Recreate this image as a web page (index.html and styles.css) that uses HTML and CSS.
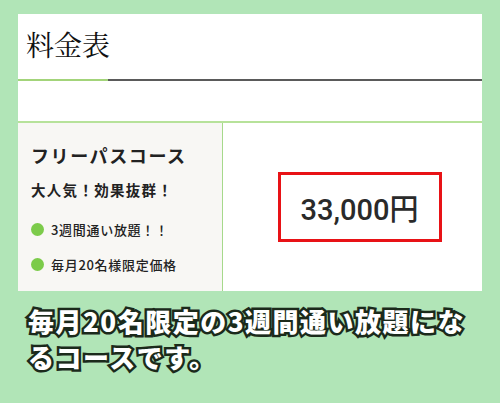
FILE: index.html
```html
<!DOCTYPE html>
<html lang="ja">
<head>
<meta charset="utf-8">
<link rel="stylesheet" href="styles.css">
</head>
<body>
<div class="panel">
  <div class="title-row"><h1 class="title">料金表</h1></div>
  <div class="blank-row"></div>
  <div class="table-row">
    <div class="course">
      <div class="course-name">フリーパスコース</div>
      <div class="course-tag">大人気！効果抜群！</div>
      <ul class="points">
        <li><span class="dot"></span>3週間通い放題！！</li>
        <li><span class="dot"></span>毎月20名様限定価格</li>
      </ul>
    </div>
    <div class="price-cell">
      <div class="price">33,000円</div>
    </div>
  </div>
</div>
<p class="caption">毎月20名限定の3週間通い放題になるコースです。</p>
</body>
</html>
```
FILE: styles.css
```css
html, body {
  margin: 0;
  padding: 0;
}
body {
  background: #b1e5b7;
  width: 500px;
  height: 403px;
  overflow: hidden;
  font-family: "Noto Sans CJK JP", "Noto Sans", sans-serif;
}
.panel {
  margin: 14px 18px 0;
  width: 464px;
  background: #fff;
}
.title-row {
  height: 67px;
  border-bottom: 2px solid #5a5a5a;
  position: relative;
  box-sizing: border-box;
  padding-left: 8px;
}
.title-row::after {
  content: "";
  position: absolute;
  left: 0;
  bottom: -2px;
  width: 90px;
  height: 2px;
  background: #a3d47a;
}
.title {
  margin: 0;
  font-weight: 400;
  font-size: 28px;
  line-height: 60px;
  color: #111;
  font-family: "Noto Serif CJK JP", "Noto Sans CJK JP", serif;
}
.blank-row {
  height: 40px;
}
.table-row {
  display: flex;
  border-top: 2px solid #b7e29a;
  height: 168px;
}
.course {
  width: 205px;
  background: #f8f7f4;
  border-right: 1px solid #a6d98b;
  box-sizing: border-box;
  padding: 20px 0 0 13px;
  color: #222;
}
.course-name {
  font-size: 18px;
  font-weight: 700;
  letter-spacing: 1.6px;
  line-height: 24px;
}
.course-tag {
  margin-top: 12px;
  font-size: 14.5px;
  font-weight: 700;
  letter-spacing: 1.3px;
  line-height: 22px;
}
.points {
  list-style: none;
  margin: 11px 0 0;
  padding: 0;
}
.points li {
  display: flex;
  align-items: center;
  height: 35px;
  font-size: 13px;
  font-weight: 500;
  letter-spacing: 0.7px;
}
.dot {
  width: 13px;
  height: 13px;
  border-radius: 50%;
  background: #7ccb4a;
  margin-right: 7px;
  flex: none;
}
.price-cell {
  flex: 1;
  display: flex;
  align-items: center;
  justify-content: center;
  padding-left: 14px;
}
.price {
  width: 164px;
  height: 70px;
  box-sizing: border-box;
  border: 3px solid #e81216;
  display: flex;
  align-items: center;
  justify-content: center;
  font-family: Roboto, "Noto Sans CJK JP", sans-serif;
  font-size: 29px;
  font-weight: 500;
  color: #2a2a2a;
}
.caption {
  margin: 12px 0 0 28px;
  width: 460px;
  font-size: 26px;
  font-weight: 900;
  line-height: 36px;
  letter-spacing: 1.5px;
  color: #fff;
  paint-order: stroke fill;
  -webkit-text-stroke: 5px #1b2a1b;
}
```
